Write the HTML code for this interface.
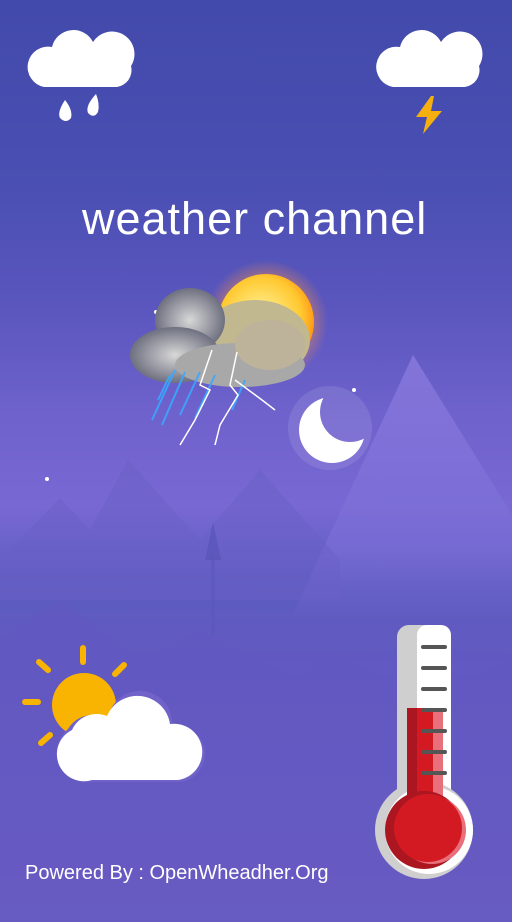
<!DOCTYPE html>
<html><head><meta charset="utf-8"><style>
html,body{margin:0;padding:0}
body{width:512px;height:922px;overflow:hidden;position:relative;font-family:"Liberation Sans",sans-serif;
background:linear-gradient(180deg,#424aab 0%,#4a4fb3 20%,#5a56be 33%,#6f62cc 45%,#7868d4 55%,#5d5cc0 63%,#6358c2 75%,#6a5fc4 100%);}
.t{position:absolute;color:#fff;white-space:nowrap}
</style></head><body>
<svg width="512" height="922" style="position:absolute;left:0;top:0">
<defs>
<radialGradient id="sun" cx="0.45" cy="0.45" r="0.6"><stop offset="0" stop-color="#fff6a0"/><stop offset="0.7" stop-color="#ffc830"/><stop offset="1" stop-color="#ff8a10"/></radialGradient>
<radialGradient id="glow"><stop offset="0.6" stop-color="#ff9040" stop-opacity="0.6"/><stop offset="1" stop-color="#ff9040" stop-opacity="0"/></radialGradient>
<radialGradient id="cl"><stop offset="0" stop-color="#d8d8d8"/><stop offset="1" stop-color="#6e7080"/></radialGradient>
<linearGradient id="mf" x1="0" y1="0" x2="0" y2="1"><stop offset="0" stop-color="#8a7ade"/><stop offset="0.7" stop-color="#7a6cd6"/><stop offset="1" stop-color="#7a6cd6" stop-opacity="0"/></linearGradient>
<mask id="moonm"><rect x="280" y="380" width="100" height="100" fill="#fff"/><circle cx="350" cy="412" r="30" fill="#000"/></mask>
</defs>
<!-- mountains -->
<polygon points="290,620 413,355 540,560 540,620" fill="url(#mf)" opacity="0.8"/>
<polygon points="0,560 60,498 90,530 128,460 200,540 260,470 340,560 340,600 0,600" fill="#6a60c6" opacity="0.5"/>
<polygon points="0,640 60,600 140,660 200,630 300,680 330,650 420,700 512,660 512,922 0,922" fill="#6558c0" opacity="0.4"/>
<polygon points="213,522 205,560 221,560" fill="#5a56b8" opacity="0.8"/>
<rect x="211" y="555" width="4" height="80" fill="#5a56b8" opacity="0.5"/>
<!-- stars -->
<circle cx="47" cy="479" r="2" fill="#fff"/><circle cx="354" cy="390" r="2" fill="#fff"/><circle cx="156" cy="312" r="2" fill="#fff"/>
<!-- moon -->
<circle cx="330" cy="428" r="42" fill="#fff" opacity="0.1"/>
<circle cx="332" cy="430" r="33" fill="#fff" mask="url(#moonm)"/>
<!-- sun -->
<circle cx="266" cy="322" r="62" fill="url(#glow)"/>
<circle cx="266" cy="322" r="48" fill="url(#sun)"/>
<!-- storm cloud -->
<g>
<ellipse cx="255" cy="340" rx="55" ry="40" fill="#c2b890"/>
<ellipse cx="190" cy="320" rx="35" ry="32" fill="url(#cl)"/>
<ellipse cx="175" cy="355" rx="45" ry="28" fill="url(#cl)"/>
<ellipse cx="240" cy="365" rx="65" ry="22" fill="#a8a8a8"/>
<ellipse cx="270" cy="345" rx="35" ry="25" fill="#bcb39a"/>
</g>
<g stroke="#3aa8ff" stroke-width="2" opacity="0.9">
<line x1="175" y1="370" x2="152" y2="420"/><line x1="185" y1="372" x2="162" y2="425"/><line x1="200" y1="372" x2="180" y2="415"/>
<line x1="215" y1="375" x2="195" y2="418"/><line x1="170" y1="375" x2="158" y2="400"/><line x1="245" y1="380" x2="232" y2="410"/>
</g>
<path d="M212,350 L200,385 L210,390 L195,420 L180,445 M237,352 L230,385 L238,395 L220,425 L215,445 M235,380 L262,400 L275,410" stroke="#fff" stroke-width="1.5" fill="none"/>
<!-- top-left cloud + drops -->
<path d="M44,87 A16,16 0 0 1 52,47 A22,22 0 0 1 93,42 A17,17 0 0 1 131,66 A17,17 0 0 1 117,87 Z" fill="#fff"/>
<path d="M65,100 Q57,112 60,118 Q66,124 71,118 Q73,110 65,100Z" fill="#fff"/>
<path d="M96,94 Q85,106 88,113 Q94,119 98,112 Q100,104 96,94Z" fill="#fff"/>
<!-- top-right cloud + bolt -->
<path d="M393,87 A16,16 0 0 1 400,47 A22,22 0 0 1 441,42 A17,17 0 0 1 479,66 A17,17 0 0 1 465,87 Z" fill="#fff"/>
<path d="M431,96 L416,117 L427,117 L423,134 L442,111 L431,111 L434,96Z" fill="#f5b010"/>
<!-- sun + cloud bottom-left -->
<g stroke="#f8b400" stroke-width="6" stroke-linecap="round">
<line x1="83" y1="648" x2="83" y2="662"/><line x1="39" y1="662" x2="48" y2="670"/><line x1="124" y1="665" x2="115" y2="674"/>
<line x1="25" y1="702" x2="38" y2="702"/><line x1="41" y1="743" x2="50" y2="735"/>
</g>
<circle cx="84" cy="705" r="32" fill="#f8b400"/>
<path d="M90,780 A30,30 0 0 1 68,727 A28,28 0 0 1 108,718 A30,30 0 0 1 172,724 A25,25 0 0 1 181,780 Z" fill="#7062c8" transform="translate(0,2)"/>
<path d="M92,780 A27,27 0 0 1 72,730 A27,27 0 0 1 107,716 A33,33 0 0 1 170,724 A27,27 0 0 1 178,780 Z" fill="#fff"/>
<!-- thermometer -->
<rect x="397" y="625" width="54" height="190" rx="12" fill="#cfcfcf"/>
<rect x="417" y="625" width="34" height="190" rx="10" fill="#fff"/>
<circle cx="424" cy="830" r="49" fill="#cfcfcf"/>
<circle cx="429" cy="830" r="44" fill="#fff"/>
<rect x="407" y="708" width="36" height="115" fill="#ab1620"/>
<rect x="417" y="708" width="26" height="115" fill="#d31a22"/>
<rect x="433" y="712" width="10" height="110" fill="#e8707a"/>
<circle cx="424" cy="830" r="39" fill="#ab1620"/>
<circle cx="432" cy="830" r="34" fill="#e8707a"/>
<circle cx="428" cy="828" r="34" fill="#d31a22"/>
<g stroke="#555" stroke-width="4" stroke-linecap="round">
<line x1="423" y1="647" x2="445" y2="647"/><line x1="423" y1="668" x2="445" y2="668"/><line x1="423" y1="689" x2="445" y2="689"/>
<line x1="423" y1="710" x2="445" y2="710"/><line x1="423" y1="731" x2="445" y2="731"/><line x1="423" y1="752" x2="445" y2="752"/><line x1="423" y1="773" x2="445" y2="773"/>
</g>
</svg>
<div class="t" style="left:82px;top:193px;font-size:45px;letter-spacing:1px;">weather channel</div>
<div class="t" style="left:25px;top:862px;font-size:20px;">Powered By : OpenWheadher.Org</div>
</body></html>
